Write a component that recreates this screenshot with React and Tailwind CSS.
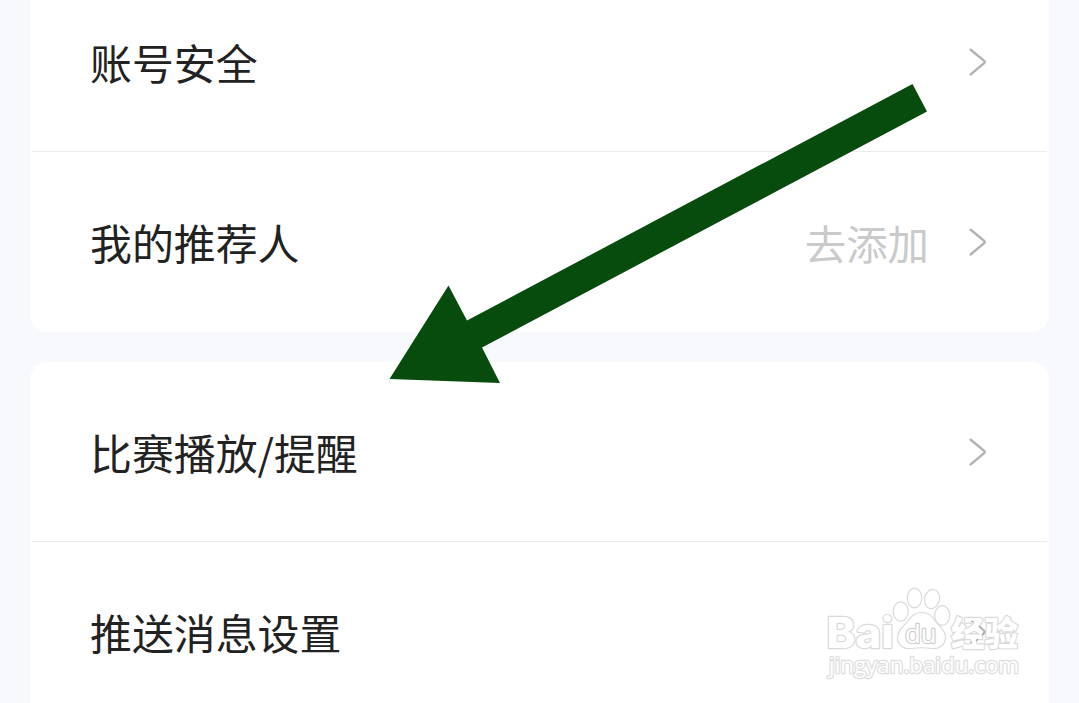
import React from "react";

const FONT = "font-['Noto_Sans_CJK_SC',sans-serif]";

const Chevron = () => (
  <svg
    className="w-[18px] h-[28px] shrink-0"
    viewBox="0 0 18 28"
    fill="none"
    stroke="#b2b2b2"
    strokeWidth="2.5"
    strokeLinecap="round"
    strokeLinejoin="round"
  >
    <path d="M1.7 1.8 L14.9 12.6 Q16.6 14 14.9 15.4 L1.7 26.4" />
  </svg>
);

const Row = ({ label, value }) => (
  <div className="h-[179px] pl-[60px] pr-[62px] pt-px flex items-center justify-between">
    <span className="pb-px text-[41.9px] leading-[60px] text-[#222222] whitespace-nowrap">{label}</span>
    <div className="flex items-center gap-[40px]">
      {value && <span className="pb-px text-[41.4px] leading-[60px] text-[#cacaca]">{value}</span>}
      <Chevron />
    </div>
  </div>
);

const Divider = () => <div className="h-px mx-0.5 bg-[#ececee]" />;

// Outlined paw logo with the site name and address
const Watermark = () => (
  <svg
    className="absolute left-[820px] top-[580px] w-[210px] h-[110px]"
    viewBox="820 580 210 110"
    fill="#ffffff"
    stroke="#dadada"
    strokeWidth="1.2"
    strokeLinejoin="round"
  >
    <text
      className="font-['Inter',sans-serif] font-extrabold [paint-order:stroke]"
      x="826.5"
      y="647.5"
      fontSize="42"
      textLength="67"
      lengthAdjust="spacingAndGlyphs"
      strokeWidth="2.4"
    >
      Bai
    </text>
    <ellipse cx="900.7" cy="611.5" rx="7.5" ry="9.7" />
    <ellipse cx="914.5" cy="598" rx="7.3" ry="9.8" />
    <ellipse cx="932" cy="599" rx="7.5" ry="9.7" transform="rotate(12 932 599)" />
    <ellipse cx="942.2" cy="615.5" rx="7.6" ry="9.8" />
    <path d="M921.5 612.5 C914 612.5 911 617 908 621 C904 626 897.5 630 897.5 638 C897.5 645 904 649.5 911 648.5 C918 647.5 925 647.5 932 648.5 C939 649.5 945.5 645 945.5 637 C945.5 630 939 626 935 621 C932 616 929 612.5 921.5 612.5Z" />
    <text
      className="font-['Open_Sans',sans-serif] font-medium [paint-order:stroke]"
      x="905"
      y="642.5"
      fontSize="25"
      textLength="31.5"
      lengthAdjust="spacingAndGlyphs"
      stroke="#cfcfcf"
      strokeWidth="2.4"
    >
      du
    </text>
    <text
      className="font-['Noto_Sans_CJK_SC',sans-serif] font-black [paint-order:stroke]"
      x="951"
      y="645.5"
      fontSize="34"
      textLength="67"
      lengthAdjust="spacingAndGlyphs"
      strokeWidth="2.4"
    >
      经验
    </text>
    {/* chevron showing through the characters */}
    <path
      d="M971 621 L974 622 M979 626 L984.5 631.5 L982 635.5 M978 639 L976 641 M971 643 L972 642"
      fill="none"
      stroke="#a3a3a3"
    />
    <text
      className="font-['Open_Sans',sans-serif] font-normal [paint-order:stroke]"
      x="829"
      y="672.5"
      fontSize="22"
      textLength="190"
      lengthAdjust="spacingAndGlyphs"
      stroke="#dedede"
      strokeWidth="2.6"
    >
      jingyan.baidu.com
    </text>
  </svg>
);

const Arrow = () => (
  <svg className="absolute inset-0 w-[1079px] h-[703px]" viewBox="0 0 1079 703">
    <polygon
      points="389.5,379 448.5,285.5 467,320.5 912.5,84 927,111.5 482,347.5 500,383"
      fill="#074b0d"
    />
  </svg>
);

const App = () => {
  return (
    <div className={`relative w-[1079px] h-[703px] overflow-hidden bg-[#f7f9fd] px-[30px] ${FONT}`}>
      <div className="-mt-[28px] pb-px bg-white rounded-b-[18px]">
        <Row label="账号安全" />
        <Divider />
        <Row label="我的推荐人" value="去添加" />
      </div>

      <div className="mt-[30px] bg-white rounded-t-[18px]">
        <Row label="比赛播放/提醒" />
        <Divider />
        <Row label="推送消息设置" />
      </div>

      <Watermark />
      <Arrow />
    </div>
  );
};

export default App;
